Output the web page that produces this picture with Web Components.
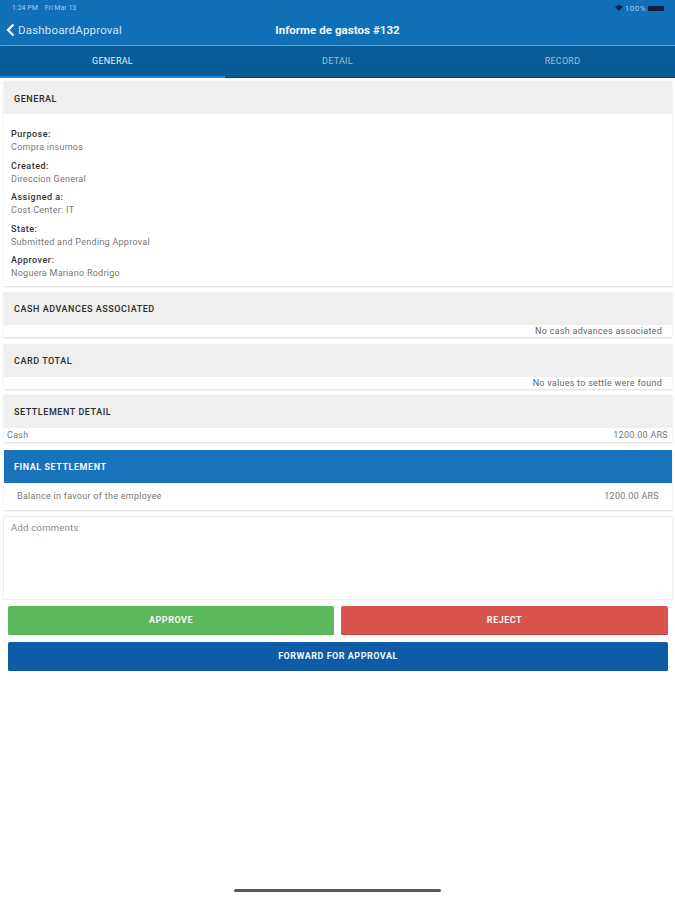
<!DOCTYPE html>
<html><head><meta charset="utf-8">
<style>
html,body{margin:0;padding:0;background:#fff}
body{width:675px;height:900px;overflow:hidden;font-family:Roboto,"Liberation Sans",sans-serif;display:flex;flex-direction:column}
app-main{flex:1;min-height:0}
</style></head><body>
<app-header></app-header>
<app-tabs></app-tabs>
<app-main>
  <info-card title="GENERAL" style="--mb:6px">
    <field-row label="Purpose:" value="Compra insumos"></field-row>
    <field-row label="Created:" value="Direccion General"></field-row>
    <field-row label="Assigned a:" value="Cost Center: IT"></field-row>
    <field-row label="State:" value="Submitted and Pending Approval"></field-row>
    <field-row label="Approver:" value="Noguera Mariano Rodrigo"></field-row>
  </info-card>
  <info-card title="CASH ADVANCES ASSOCIATED" style="--mb:7px"><note-line>No cash advances associated</note-line></info-card>
  <info-card title="CARD TOTAL" style="--mb:6px"><note-line>No values to settle were found</note-line></info-card>
  <info-card title="SETTLEMENT DETAIL" style="--mb:8px"><split-line style="--px:3px;--pr:4px;--h:14px">Cash<span slot="end">1200.00 ARS</span></split-line></info-card>
  <info-card title="FINAL SETTLEMENT" primary style="--mb:7px"><split-line style="--px:13px;--pr:13px;--h:27px">Balance in favour of the employee<span slot="end">1200.00 ARS</span></split-line></info-card>
  <comment-box>Add comments</comment-box>
  <action-bar></action-bar>
</app-main>
<home-bar></home-bar>
<script>
function def(name,html,init){
  customElements.define(name,class extends HTMLElement{
    constructor(){super();this.attachShadow({mode:'open'}).innerHTML=html;}
    connectedCallback(){if(init)init(this,this.shadowRoot);}
  });
}
def('app-header',`<style>
:host{display:block;background:#0f70b7;color:#fff;height:45px;box-shadow:0 1px 0 #5fa3d6;box-sizing:border-box;margin-bottom:1px}
.status{height:15px;display:flex;justify-content:space-between;align-items:center;padding:1px 11px 0 12px;font-size:7px;color:#a9cbe6;box-sizing:border-box}
.status b{font-weight:400;margin-right:7px}
.right{display:flex;align-items:center;gap:2px}
.right span:first-of-type{font-size:8px;letter-spacing:.5px}
.batt{width:16px;height:5px;background:#0b2340;border-radius:1px}
.nav{height:30px;display:grid;grid-template-columns:1fr auto 1fr;align-items:center}
.back{display:flex;align-items:center;gap:3px;font-size:11.5px;letter-spacing:.18px;color:#d5e5f3;padding-left:6px}
.title{font-size:11.5px;font-weight:700;color:#f4f8fc;letter-spacing:.05px}
</style>
<div class="status"><div><b>1:24 PM</b>Fri Mar 13</div><div class="right">
<svg width="8" height="6" viewBox="0 0 9 7"><path d="M0 2.200C2.500-.4 6.500-.4 9 2.200L4.500 7z" fill="#0b2340"/></svg><span>100%</span><span class="batt"></span></div></div>
<div class="nav"><div class="back"><svg width="9" height="14" viewBox="0 0 9 14"><path d="M7.500 1.500 2 7l5.500 5.500" fill="none" stroke="#fff" stroke-width="2.200"/></svg>DashboardApproval</div><div class="title">Informe de gastos #132</div><div></div></div>`);
def('app-tabs',`<style>
:host{display:grid;grid-template-columns:repeat(3,1fr);height:32px;background:linear-gradient(#0a5c99,#085a94);border-bottom:1px solid #073f78;box-sizing:border-box;font-size:9px;letter-spacing:.25px}
div{display:flex;align-items:center;justify-content:center;color:#9fc0d9;box-sizing:border-box;padding-bottom:2px}
.on{color:#e6f0f8;border-bottom:2px solid #1a86dd;margin-bottom:-1px;padding-bottom:1px}
</style><div class="on">GENERAL</div><div>DETAIL</div><div>RECORD</div>`);
customElements.define('app-main',class extends HTMLElement{
  constructor(){super();this.attachShadow({mode:'open'}).innerHTML=`<style>:host{display:block;padding:3px 3px 0 4px;box-sizing:border-box}</style><slot></slot>`;}
});
def('info-card',`<style>
:host{display:block;background:#fff;margin-bottom:var(--mb,6px);box-shadow:0 1px 2px rgba(0,0,0,.14),0 0 1px rgba(0,0,0,.06)}
.h{height:33px;box-sizing:border-box;padding:2px 0 0 10px;background:#efefef;display:flex;align-items:center;font-size:9px;font-weight:500;color:#2b2b2b;letter-spacing:.55px}
:host([primary]) .h{background:#1a72ba;color:#f2f7fb;font-weight:700}
</style><div class="h"></div><slot></slot>`,(el,s)=>{s.querySelector('.h').textContent=el.getAttribute('title');el.removeAttribute('title');});
def('field-row',`<style>
:host{display:block;padding:0 7px;height:31.600px;font-size:9px;line-height:13px}
:host(:first-child){margin-top:14px}
.l{color:#333;font-weight:500;letter-spacing:.5px}.v{color:#777;letter-spacing:.27px}
</style><div class="l"></div><div class="v"></div>`,(el,s)=>{s.querySelector('.l').textContent=el.getAttribute('label');s.querySelector('.v').textContent=el.getAttribute('value');});
def('note-line',`<style>:host{display:block;text-align:right;padding-right:10px;height:12px;line-height:13px;font-size:9px;color:#666;letter-spacing:.27px}</style><slot></slot>`);
def('split-line',`<style>:host{display:flex;justify-content:space-between;align-items:center;height:var(--h);padding:0 var(--pr) 0 var(--px);font-size:9px;color:#777;letter-spacing:.28px}</style><slot></slot><slot name="end"></slot>`);
def('comment-box',`<style>:host{display:block;height:82px;background:#fff;box-shadow:0 0 2px rgba(0,0,0,.2);padding:4px 7px;box-sizing:border-box;font-size:9.500px;line-height:13px;color:#888;letter-spacing:.25px}</style><slot></slot>`);
def('action-btn',`<style>
:host{display:flex;align-items:center;justify-content:center;height:29px;border-radius:2px;color:#f6f6f6;font-size:9px;font-weight:700;letter-spacing:.5px;background:var(--bg);box-shadow:inset 0 -1px 0 var(--bd)}
</style><slot></slot>`);
def('action-bar',`<style>
:host{display:grid;grid-template-columns:326px 327px;column-gap:7px;row-gap:7px;padding:7px 0 0 4px;width:660px}
.w{grid-column:1/3}
</style>
<action-btn style="--bg:#5cb85c;--bd:#54ae54">APPROVE</action-btn>
<action-btn style="--bg:#d9534f;--bd:#ce3f3b">REJECT</action-btn>
<action-btn class="w" style="--bg:#0d5ca5;--bd:#0b548f">FORWARD FOR APPROVAL</action-btn>`);
def('home-bar',`<style>:host{display:flex;justify-content:center;height:11px;flex:none}i{display:block;width:207px;height:3px;background:#55595c;border-radius:2px}</style><i></i>`);
</script>
</body></html>
